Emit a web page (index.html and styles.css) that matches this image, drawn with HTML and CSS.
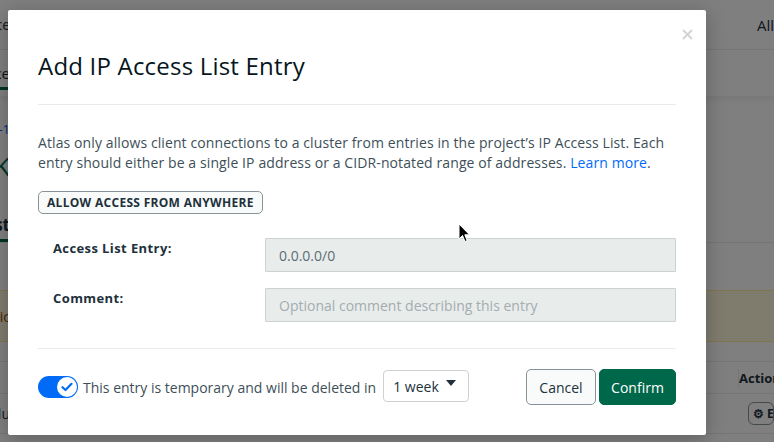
FILE: index.html
```html
<!DOCTYPE html>
<html>
<head>
<meta charset="utf-8">
<link rel="stylesheet" href="styles.css">
</head>
<body>
<div class="page">
  <div class="row topbar"><span class="clip-l">Database Acce</span><span class="all">All</span></div>
  <div class="row tabs"><span class="tab clip-l">Acce</span></div>
  <div class="row area">
    <div class="left-col">
      <span class="crumb clip-l">ject-1</span>
      <span class="bigk clip-l">K</span>
    </div>
  </div>
  <div class="row subtabs"><span class="subtab clip-l">ist</span></div>
  <div class="row spacer"></div>
  <div class="banner"><span class="clip-l">ic</span></div>
  <div class="row gaprow"></div>
  <div class="row thead"><span></span><span class="th">Actions</span></div>
  <div class="row trow"><span class="clip-l">Inclu</span><span class="editbtn">⚙ Edit</span></div>
</div>

<div class="overlay">
  <div class="modal">
    <button class="close" aria-label="Close">
      <svg width="11" height="11" viewBox="0 0 11 11"><path d="M1 1L10 10M10 1L1 10" stroke="#d2d5d6" stroke-width="2"/></svg>
    </button>
    <h2 class="title">Add IP Access List Entry</h2>
    <hr class="rule">
    <p class="intro">Atlas only allows client connections to a cluster from entries in the project’s IP Access List. Each entry should either be a single IP address or a CIDR-notated range of addresses. <a class="link">Learn more</a>.</p>
    <button class="anywhere">ALLOW ACCESS FROM ANYWHERE</button>
    <div class="form">
      <div class="field">
        <label class="label">Access List Entry:</label>
        <div class="input value">0.0.0.0/0</div>
      </div>
      <div class="field">
        <label class="label">Comment:</label>
        <div class="input placeholder">Optional comment describing this entry</div>
      </div>
    </div>
    <hr class="rule rule2">
    <div class="footer">
      <div class="temp">
        <span class="toggle"><span class="knob"><svg width="12" height="10" viewBox="0 0 12 10"><path d="M1.5 5.2L4.5 8L10.5 1.8" fill="none" stroke="#016bf8" stroke-width="2.2" stroke-linecap="round" stroke-linejoin="round"/></svg></span></span>
        <span class="temp-text">This entry is temporary and will be deleted in</span>
        <span class="select">1 week<span class="caret"></span></span>
      </div>
      <div class="actions">
        <button class="btn cancel">Cancel</button>
        <button class="btn confirm">Confirm</button>
      </div>
    </div>
  </div>
  <svg class="cursor" width="13" height="20" viewBox="0 0 13 20"><path d="M1 1L1 16L4.5 12.5L7 18.5L9.2 17.6L6.8 11.8L11.5 11.8Z" fill="#000" stroke="#fff" stroke-width="1"/></svg>
</div>
</body>
</html>
```
FILE: styles.css
```css
* { box-sizing: border-box; }
html, body { margin: 0; padding: 0; }
body {
  width: 774px;
  height: 442px;
  overflow: hidden;
  position: relative;
  font-family: "Open Sans", Lato, sans-serif;
  background: #fff;
}
.page { width: 774px; height: 442px; overflow: hidden; color: #21313c; font-size: 14px; }
.row { display: flex; justify-content: space-between; align-items: center; border-bottom: 1px solid #e8edeb; }
.clip-l { white-space: nowrap; direction: rtl; overflow: hidden; width: 10px; display: inline-block; }
.topbar { height: 50px; }
.topbar .all { width: 17px; overflow: hidden; white-space: nowrap; font-size: 15px; }
.tabs { height: 46px; align-items: flex-start; border-bottom: none; box-shadow: 0 4px 6px rgba(0,0,0,0.06); }
.tabs .tab { margin-top: 13px; padding-bottom: 4px; border-bottom: 3px solid #00684a; font-size: 15px; }
.area { height: 110px; align-items: flex-start; border-bottom: none; }
.left-col { display: flex; flex-direction: column; }
.crumb { color: #016bf8; font-size: 13px; margin-top: 24px; line-height: 18px; }
.bigk { color: #00684a; font-size: 26px; margin-top: 12px; line-height: 32px; }
.subtabs { height: 37px; align-items: flex-end; }
.subtab { font-weight: 700; font-size: 17px; line-height: 22px; padding-bottom: 3px; border-bottom: 3px solid #00684a; }
.spacer { height: 47px; border-bottom: none; }
.banner { height: 52px; background: #fef7db; border-top: 1px solid #ffec9e; border-bottom: 1px solid #ffec9e; display: flex; align-items: center; color: #944f01; }
.gaprow { height: 20px; }
.thead { height: 32px; }
.thead .th { font-weight: 700; font-size: 13px; width: 36px; overflow: hidden; white-space: nowrap; border-left: 1px solid #e8edeb; }
.trow { height: 40px; }
.editbtn { border: 1px solid #889397; border-radius: 6px; padding: 2px 4px; width: 26px; overflow: hidden; white-space: nowrap; font-weight: 700; font-size: 12px; }

.overlay { position: absolute; inset: 0; background: rgba(0,0,0,0.5); }
.modal {
  position: absolute;
  left: 8px; top: 10px;
  width: 698px; height: 425px;
  background: #fff;
  border-radius: 2px;
  box-shadow: 0 4px 20px rgba(0,0,0,0.25);
  padding: 40px 30px 0 30px;
  color: #3d4f58;
}
.close { position: absolute; right: 13px; top: 19px; border: none; background: none; padding: 0; width: 11px; height: 11px; line-height: 0; }
.title { margin: 0; font-size: 24px; line-height: 32px; font-weight: 400; color: #061621; letter-spacing: 0.2px; }
.rule { margin: 22px 0 0 0; border: none; border-top: 1px solid #e8edeb; height: 0; }
.intro { margin: 28px 0 0 0; font-size: 14px; line-height: 20px; color: #3d4f58; letter-spacing: 0.1px; }
.link { color: #016bf8; text-decoration: none; }
.anywhere {
  margin-top: 18px;
  height: 23px;
  padding: 0 8px;
  border: 1px solid #889397;
  border-radius: 5px;
  background: #f9fbfa;
  font-family: inherit;
  font-weight: 700;
  font-size: 12px;
  letter-spacing: 0.3px;
  color: #21313c;
}
.form { display: flex; flex-direction: column; gap: 16px; margin-top: 24px; }
.field { display: flex; align-items: flex-start; }
.label { width: 227px; padding-left: 15px; line-height: 20px; font-weight: 700; font-size: 13px; letter-spacing: 0.4px; color: #21313c; }
.input { flex: 1; height: 34px; border: 1px solid #ccd1d3; background: #e8edeb; border-radius: 1px; padding: 0 13px; display: flex; align-items: center; font-size: 14px; }
.value { color: #5c6c75; }
.placeholder { color: #a3acb0; }
.rule2 { margin-top: 26px; }
.footer { display: flex; justify-content: space-between; align-items: center; margin-top: 20px; }
.temp { display: flex; align-items: center; }
.toggle { width: 40px; height: 22px; border-radius: 11px; background: #016bf8; position: relative; display: inline-block; }
.knob { position: absolute; right: 1px; top: 1px; width: 20px; height: 20px; border-radius: 50%; background: #fff; display: flex; align-items: center; justify-content: center; }
.temp-text { margin-left: 5px; font-size: 14px; color: #3d4f58; }
.select { margin-left: 7px; width: 86px; height: 32px; border: 1px solid #ccd1d3; border-radius: 4px; display: flex; align-items: center; padding-left: 9px; font-size: 14px; color: #21313c; position: relative; margin-top: -2px; }
.caret { position: absolute; right: 12px; top: 9px; width: 0; height: 0; border-left: 5px solid transparent; border-right: 5px solid transparent; border-top: 6px solid #21313c; }
.actions { display: flex; gap: 3px; }
.btn { height: 36px; border-radius: 5px; font-family: inherit; font-size: 14px; padding: 0; }
.cancel { width: 70px; border: 1px solid #889397; background: #f9fbfa; color: #21313c; }
.confirm { width: 77px; border: 1px solid #00684a; background: #00684a; color: #fff; font-weight: 500; }
.cursor { position: absolute; left: 458px; top: 223px; }
```
